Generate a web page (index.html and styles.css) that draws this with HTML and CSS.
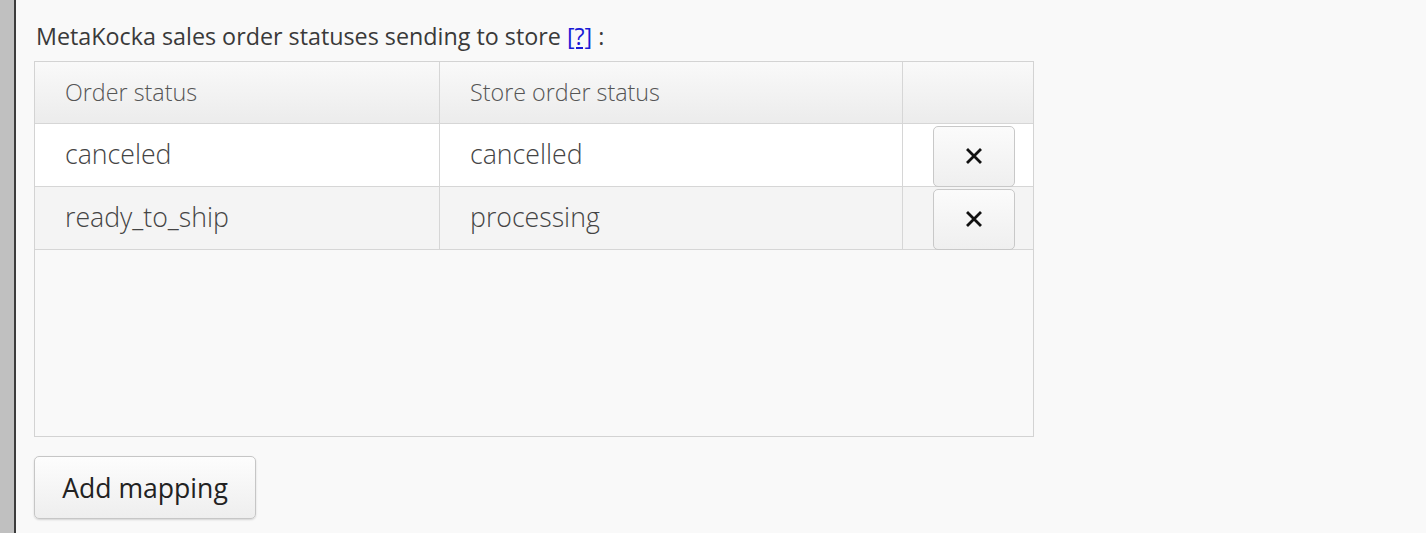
FILE: index.html
```html
<!DOCTYPE html>
<html>
<head>
<meta charset="utf-8">
<link rel="stylesheet" href="styles.css">
</head>
<body>
<div class="page">
  <div class="strip"></div>
  <div class="content">
    <div class="label">MetaKocka sales order statuses sending to store <a class="help" href="#">[?]</a> :</div>
    <div class="grid">
      <div class="row head">
        <div class="cell c1">Order status</div>
        <div class="cell c2">Store order status</div>
        <div class="cell c3"></div>
      </div>
      <div class="row odd">
        <div class="cell c1 val">canceled</div>
        <div class="cell c2 val">cancelled</div>
        <div class="cell c3"><button class="del"><svg class="xicon" viewBox="0 0 16 16" width="16" height="16"><path d="M2 2 L14 14 M14 2 L2 14" stroke="#111" stroke-width="2.8" stroke-linecap="square" fill="none"/></svg></button></div>
      </div>
      <div class="row even">
        <div class="cell c1 val">ready_to_ship</div>
        <div class="cell c2 val">processing</div>
        <div class="cell c3"><button class="del"><svg class="xicon" viewBox="0 0 16 16" width="16" height="16"><path d="M2 2 L14 14 M14 2 L2 14" stroke="#111" stroke-width="2.8" stroke-linecap="square" fill="none"/></svg></button></div>
      </div>
    </div>
    <button class="add">Add mapping</button>
  </div>
</div>
</body>
</html>
```
FILE: styles.css
```css
html, body {
  margin: 0;
  padding: 0;
  background: #f9f9f9;
  font-family: "Open Sans", "DejaVu Sans", sans-serif;
}
.page {
  display: flex;
  min-height: 533px;
}
.strip {
  width: 14px;
  background: #c0c0c0;
  border-right: 2px solid #3c3c3c;
  flex: none;
}
.content {
  padding: 22px 0 0 18px;
}
.label {
  font-size: 23.3px;
  color: #3a3a3a;
  line-height: 28px;
  height: 39px;
  padding-left: 2px;
}
.help {
  color: #1a1ad6;
}
.grid {
  width: 1000px;
  height: 376px;
  box-sizing: border-box;
  border: 1px solid #d3d3d3;
  background: #f9f9f9;
}
.row {
  display: grid;
  grid-template-columns: 405px 463px 1fr;
  height: 63px;
  box-sizing: border-box;
  border-bottom: 1px solid #d6d6d6;
}
.row.head {
  height: 62px;
  background: linear-gradient(#f9f9f9, #ececec);
}
.row.odd { background: #ffffff; }
.row.even { background: #f4f4f4; }
.cell {
  border-right: 1px solid #d6d6d6;
  display: flex;
  align-items: center;
  padding-left: 30px;
  padding-bottom: 2px;
  font-weight: 300;
  color: #555;
  font-size: 23.3px;
}
.cell.c3 {
  border-right: none;
  padding-left: 0;
  padding-bottom: 0;
  align-items: flex-start;
  justify-content: flex-end;
  padding-right: 18px;
}
.cell.val {
  font-size: 26.7px;
  color: #444;
  padding-bottom: 4px;
}
.del {
  margin-top: 2px;
  width: 82px;
  height: 61px;
  border: 1px solid #c8c8c8;
  border-radius: 5px;
  background: linear-gradient(#fbfbfb, #efefef);
  padding: 0;
  display: flex;
  align-items: center;
  justify-content: center;
}
.xicon {
  display: block;
  margin-top: -2px;
}
.add {
  margin-top: 19px;
  width: 222px;
  height: 63px;
  border: 1px solid #c6c6c6;
  border-radius: 5px;
  background: linear-gradient(#fdfdfd, #eeeeee);
  box-shadow: 0 1px 2px rgba(0,0,0,0.15);
  font-family: "Open Sans", sans-serif;
  font-size: 26.6px;
  color: #222;
  padding: 0;
}
```
